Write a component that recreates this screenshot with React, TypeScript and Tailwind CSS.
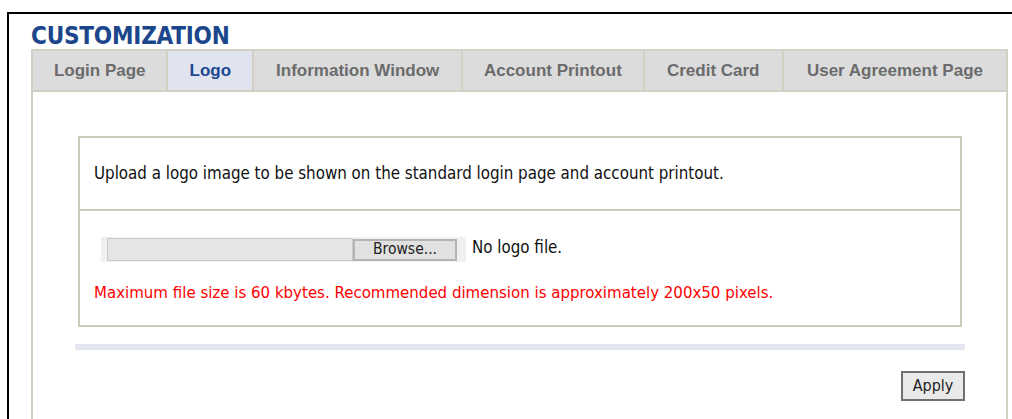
import React from "react";

const tabs = [
  { label: "Login Page", w: "w-[136px]", active: false },
  { label: "Logo", w: "w-[86px]", active: true },
  { label: "Information Window", w: "w-[210px]", active: false },
  { label: "Account Printout", w: "w-[182px]", active: false },
  { label: "Credit Card", w: "w-[140px]", active: false },
  { label: "User Agreement Page", w: "w-[223px]", active: false },
];

const bodyFont = { fontFamily: "Tahoma, 'DejaVu Sans Condensed', 'DejaVu Sans', sans-serif" };

export default function App() {
  return (
    <div className="w-[1012px] h-[419px] overflow-hidden bg-white pt-[12px] pl-[7px]">
      <div className="w-[1040px] h-[420px] border-t-2 border-l-2 border-black pl-[22px] pt-[9px]">
        <h1
          className="text-[24px] leading-[26px] font-bold text-[#1b468c] tracking-[-0.2px]"
          style={bodyFont}
        >
          CUSTOMIZATION
        </h1>

        <div className="w-[977px]" style={{ fontFamily: "'Liberation Sans', Arial, sans-serif" }}>
          {/* tab strip */}
          <div className="flex h-[43px] border-2 border-[#d2cfc3] bg-[#dcdcdc]">
            {tabs.map((t, i) => (
              <div
                key={t.label}
                className={`${t.w} flex items-center justify-center text-[17px] font-bold ${
                  i < tabs.length - 1 ? "border-r-2 border-[#d2cfc3]" : ""
                } ${t.active ? "bg-[#dfe4ee] text-[#1d4790]" : "text-[#6b6b6b]"}`}
              >
                {t.label}
              </div>
            ))}
          </div>

          {/* tab body */}
          <div className="h-[340px] border-l-2 border-r-2 border-[#d2cfc3] pt-[44px] pl-[42px]">
            <div className="w-[890px]" style={bodyFont}>
              <div className="ml-[3px] w-[884px] border-2 border-[#cdc9bb]">
                <div className="h-[71px] flex items-center pl-[14px] text-[16.8px] text-[#111]">
                  Upload a logo image to be shown on the standard login page and account printout.
                </div>
                <div className="border-t-2 border-[#cdc9bb] h-[116px] pl-[21px] pt-[26px]">
                  <div className="flex items-center">
                    <div className="flex items-center h-[25px] w-[365px] bg-[#f0f0f0] pl-[6px]">
                      <div className="h-[23px] w-[246px] border border-[#c8c8c8] bg-[#e5e5e5]" />
                      <div className="h-[22px] w-[104px] border-2 border-[#b4b4b4] bg-[#e1e1e1] flex items-center justify-center text-[15.5px] text-[#222]">
                        Browse...
                      </div>
                    </div>
                    <span className="ml-[6px] text-[16.8px] text-[#111] -mt-[3px]">No logo file.</span>
                  </div>
                  <div className="mt-[18px] -ml-[7px] text-[16.7px] text-[#ff0000]">
                    Maximum file size is 60 kbytes. Recommended dimension is approximately 200x50 pixels.
                  </div>
                </div>
              </div>

              <div className="mt-[17px] h-[6px] w-[890px] bg-[#e3e6f0]" />

              <div className="flex justify-end mt-[21px]">
                <button className="h-[30px] w-[64px] border-2 border-[#707070] bg-[#e9e9e9] text-[16px] text-[#222] flex items-center justify-center">
                  Apply
                </button>
              </div>
            </div>
          </div>
        </div>
      </div>
    </div>
  );
}
